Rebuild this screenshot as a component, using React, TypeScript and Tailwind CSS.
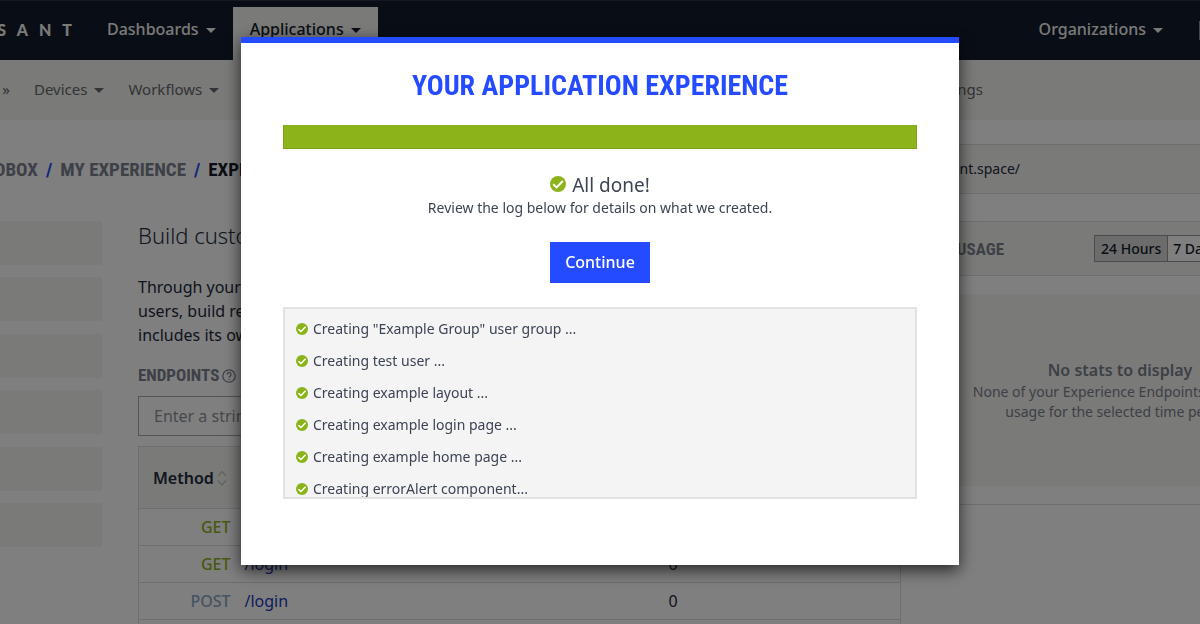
import { ReactNode } from "react";

const endpoints = [
  { method: "GET", path: "/", requests: 0 },
  { method: "GET", path: "/login", requests: 0 },
  { method: "POST", path: "/login", requests: 0 },
];

const logEntries = [
  'Creating "Example Group" user group ...',
  "Creating test user ...",
  "Creating example layout ...",
  "Creating example login page ...",
  "Creating example home page ...",
  "Creating errorAlert component...",
];

function Caret() {
  return (
    <svg viewBox="0 0 10 5" className="mt-[3px] h-[5px] w-[10px] shrink-0" fill="currentColor" aria-hidden="true">
      <path d="M0 0h10L5 5z" />
    </svg>
  );
}

function CheckBadge({ className }: { className: string }) {
  return (
    <svg viewBox="0 0 16 16" className={className} aria-hidden="true">
      <circle cx="8" cy="8" r="8" fill="#8db31b" />
      <path d="M3.2 8.200l3.400 3.200 6.200-6.400" fill="none" stroke="#fff" strokeWidth="1.9" />
    </svg>
  );
}

function MenuButton({ children, className = "" }: { children: ReactNode; className?: string }) {
  return (
    <button type="button" className={`flex items-center gap-[7px] whitespace-nowrap ${className}`}>
      {children}
      <Caret />
    </button>
  );
}

function TopBar() {
  return (
    <header className="flex h-15 border-t border-[#2a3242] bg-[#121b2c] text-base font-medium text-[#f4f4f0]">
      <div className="flex w-[83px] shrink-0 items-center justify-end pb-[2px] font-['Lato',sans-serif] text-base font-black tracking-[11px]">
        SANT
      </div>
      <MenuButton className="ml-6 pb-1">Dashboards</MenuButton>
      <MenuButton className="mt-[6px] ml-[17px] bg-[#f4f4f0] px-[17px] pb-[10px] text-[#121b2c]">Applications</MenuButton>
      <MenuButton className="ml-auto pb-1">Organizations</MenuButton>
      <div className="my-5 ml-9 w-px bg-[#8b8f96]" />
    </header>
  );
}

function SubNav() {
  return (
    <nav className="flex h-15 items-center bg-[#f4f4f0] pb-[2px] text-[15px] text-[#65686f]">
      <span className="w-[10px] text-right">»</span>
      <MenuButton className="ml-6">Devices</MenuButton>
      <MenuButton className="ml-6">Workflows</MenuButton>
      <a href="#settings" className="mr-[217px] ml-auto">Settings</a>
    </nav>
  );
}

function Breadcrumb() {
  return (
    <div className="flex h-12 items-center gap-2 pt-[2px] text-[19px] font-bold whitespace-nowrap text-[#7b818e] font-['Roboto_Condensed','Roboto',sans-serif]">
      <a href="#sandbox" className="flex w-[38px] justify-end">DBOX</a>
      <span className="text-[#244bff]">/</span>
      <a href="#experience">MY EXPERIENCE</a>
      <span className="text-[#244bff]">/</span>
      <span className="text-[#121b2c]">EXPERIENCE</span>
    </div>
  );
}

function Endpoints() {
  return (
    <section className="min-w-0 flex-1 text-[#222a3c]">
      <h1 className="text-[22px] leading-[30px] font-light">Build custom web experiences</h1>
      <p className="mt-[25px] text-base leading-6">
        Through your application you can manage
        <br />
        users, build responsive pages and more. It
        <br />
        includes its own domain.
      </p>
      <div className="mt-[11px] flex h-9 items-center gap-[3px] text-[#7b818e]">
        <h2 className="text-[17px] font-bold font-['Roboto_Condensed','Roboto',sans-serif]">ENDPOINTS</h2>
        <svg viewBox="0 0 14 14" className="h-[14px] w-[14px]" fill="none" stroke="currentColor" strokeWidth="1.3" aria-hidden="true">
          <circle cx="7" cy="7" r="6.2" />
          <path d="M5 5.500a2 2 0 1 1 2.900 1.800c-.6.3-.9.6-.9 1.200M7 9.800v1.200" />
        </svg>
      </div>
      <input
        aria-label="Filter endpoints"
        placeholder="Enter a string to filter"
        className="mt-[2px] block h-10 w-full border border-[#a8a8a8] px-[15px] text-base placeholder:text-[#8f939b]"
      />
      <table className="mt-[10px] w-full border border-[#dcdcdc] text-base">
        <thead className="bg-[#f4f4f0]">
          <tr className="h-[62px] text-left">
            <th className="w-[92px] pl-[14px] font-semibold">
              <span className="flex items-center gap-[3px]">
                Method
                <svg viewBox="0 0 10 16" className="h-4 w-[10px]" fill="none" stroke="#c4c4c2" strokeWidth="1.3" aria-hidden="true">
                  <path d="M1 6l4-4.500L9 6M1 10.500l4 4.500 4-4.500" />
                </svg>
              </span>
            </th>
            <th className="pl-[14px] font-semibold">Route</th>
            <th className="w-[232px] font-semibold">Requests</th>
          </tr>
        </thead>
        <tbody>
          {endpoints.map((row) => (
            <tr key={row.method + row.path} className="h-[37px] border-y border-[#dcdcdc]">
              <td className={`text-right font-medium ${row.method === "GET" ? "text-[#8db31b]" : "text-[#8ba7c4]"}`}>{row.method}</td>
              <td className="pl-[14px]">
                <a href={`#${row.path}`} className="text-[#2339b8]">{row.path}</a>
              </td>
              <td>{row.requests}</td>
            </tr>
          ))}
          <tr className="h-[37px]">
            <td colSpan={3} />
          </tr>
        </tbody>
      </table>
    </section>
  );
}

function UsagePanel() {
  return (
    <aside className="w-[374px] shrink-0 pt-6 text-[#222a3c]">
      <div className="flex h-[50px] items-center border-y border-[#dcdcdc] bg-[#f4f4f0] text-sm">
        <span className="flex w-[87px] justify-end whitespace-nowrap">losant.space/</span>
      </div>
      <section className="mt-[27px] border-b border-[#dcdcdc] pb-[18px]">
        <div className="flex h-[55px] items-center justify-between border-y border-[#dcdcdc] bg-[#f4f4f0] text-sm font-medium">
          <h2 className="w-[71px] pt-[2px] text-right text-[17px] font-bold text-[#7b818e] font-['Roboto_Condensed','Roboto',sans-serif]">
            USAGE
          </h2>
          <div className="mr-8 flex h-[27px] w-[181px] whitespace-nowrap text-[#121b2c]">
            <button type="button" className="border border-[#989898] bg-[#d8d8d8] px-[6px]">24 Hours</button>
            <button type="button" className="flex-1 border-y border-r border-[#989898] bg-white px-[5px] text-left">7 Days</button>
          </div>
        </div>
        <div className="mt-[18px] flex h-[192px] flex-col items-center justify-center bg-[#f4f4f0] text-center text-[#7b818e]">
          <h3 className="text-base leading-6 font-semibold">No stats to display</h3>
          <p className="w-[310px] text-sm leading-5">None of your Experience Endpoints have any usage for the selected time period.</p>
        </div>
      </section>
    </aside>
  );
}

function ProgressDialog() {
  return (
    <div className="fixed inset-0 flex items-start justify-center bg-black/50 pt-[37px]">
      <div
        role="dialog"
        aria-modal="true"
        aria-labelledby="dialog-title"
        className="w-[718px] border-t-6 border-[#244bff] bg-white px-[42px] pb-[66px] text-[#3c4454] shadow-[0_5px_15px_rgba(0,0,0,0.7)]"
      >
        <h2
          id="dialog-title"
          className="pt-[25px] text-center text-[28px] leading-9 font-bold whitespace-nowrap text-[#244bff] font-['Roboto_Condensed','Roboto',sans-serif]"
        >
          YOUR APPLICATION EXPERIENCE
        </h2>
        <div role="progressbar" aria-valuenow={100} aria-label="Progress" className="mt-[21px] h-6 border border-t-0 border-[#7fa30f] bg-[#8db31b]" />
        <p className="mt-6 flex items-center justify-center gap-[6px] text-[19px] leading-6">
          <CheckBadge className="mb-[2px] h-4 w-4" />
          All done!
        </p>
        <p className="mt-[1px] text-center text-sm leading-5">Review the log below for details on what we created.</p>
        <div className="mt-6 flex justify-center">
          <button type="button" className="h-[41px] bg-[#244bff] px-[15px] pb-[2px] text-base font-medium text-white">Continue</button>
        </div>
        <ul className="mt-6 h-[192px] overflow-hidden border-2 border-[#e3e3e3] bg-[#f4f4f4] px-[11px] pt-1 text-sm">
          {logEntries.map((entry) => (
            <li key={entry} className="flex h-8 items-center gap-[5px]">
              <CheckBadge className="h-3 w-3" />
              {entry}
            </li>
          ))}
        </ul>
      </div>
    </div>
  );
}

export default function App() {
  return (
    <div className="h-screen overflow-hidden bg-white font-['Noto_Sans',sans-serif]">
      <TopBar />
      <SubNav />
      <div className="flex gap-8">
        <main className="min-w-[901px] flex-1 pt-[25px]">
          <Breadcrumb />
          <div className="mt-[27px] flex gap-9">
            <div className="mt-px flex h-[326px] w-[102px] shrink-0 flex-col justify-between">
              {[1, 2, 3, 4, 5, 6].map((n) => (
                <div key={n} className="h-11 bg-[#f4f4f0]" />
              ))}
            </div>
            <Endpoints />
          </div>
        </main>
        <UsagePanel />
      </div>
      <ProgressDialog />
    </div>
  );
}
